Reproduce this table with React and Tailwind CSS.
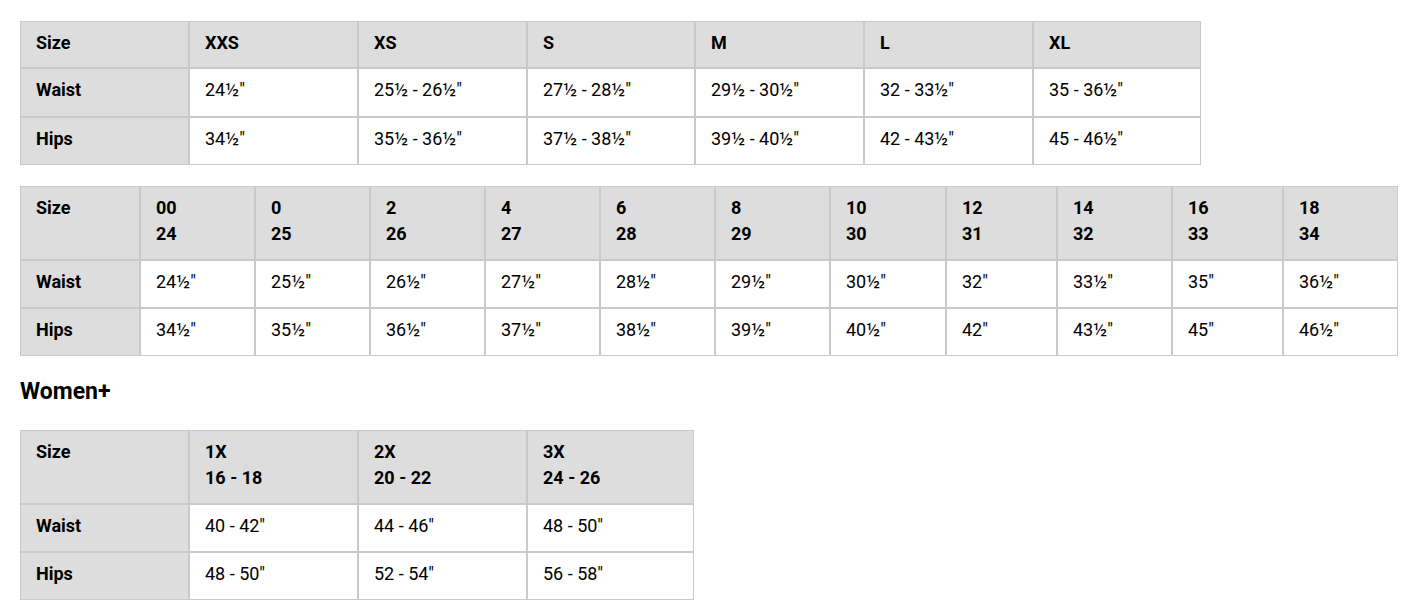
const t1 = {
  widths: [169, 169, 169, 168, 169, 169, 168],
  headPad: "pb-[11px]",
  waistPad: "pb-[13px]",
  head: ["XXS", "XS", "S", "M", "L", "XL"],
  waist: ["24½\"", "25½ - 26½\"", "27½ - 28½\"", "29½ - 30½\"", "32 - 33½\"", "35 - 36½\""],
  hips: ["34½\"", "35½ - 36½\"", "37½ - 38½\"", "39½ - 40½\"", "42 - 43½\"", "45 - 46½\""],
};

const t2 = {
  widths: [120, 115, 115, 115, 115, 115, 115, 116, 111, 115, 111, 115],
  headPad: "pb-[12px]",
  waistPad: "pb-[12px]",
  head: [["00", "24"], ["0", "25"], ["2", "26"], ["4", "27"], ["6", "28"], ["8", "29"], ["10", "30"], ["12", "31"], ["14", "32"], ["16", "33"], ["18", "34"]],
  waist: ["24½\"", "25½\"", "26½\"", "27½\"", "28½\"", "29½\"", "30½\"", "32\"", "33½\"", "35\"", "36½\""],
  hips: ["34½\"", "35½\"", "36½\"", "37½\"", "38½\"", "39½\"", "40½\"", "42\"", "43½\"", "45\"", "46½\""],
};

const t3 = {
  widths: [169, 169, 169, 167],
  headPad: "pb-[12px]",
  waistPad: "pb-[12px]",
  head: [["1X", "16 - 18"], ["2X", "20 - 22"], ["3X", "24 - 26"]],
  waist: ["40 - 42\"", "44 - 46\"", "48 - 50\""],
  hips: ["48 - 50\"", "52 - 54\"", "56 - 58\""],
};

const cell = "border border-[#c9c9c9] pl-[15px] pr-2 pt-[8px] text-left align-top";

function SizeTable({ data }) {
  const total = data.widths.reduce((a, b) => a + b, 0);
  return (
    <table className="table-fixed border-separate border-spacing-0" style={{ width: total }}>
      <colgroup>
        {data.widths.map((w, i) => (
          <col key={i} style={{ width: w }} />
        ))}
      </colgroup>
      <thead>
        <tr className="bg-[#dddddd]">
          <th className={`${cell} ${data.headPad} font-bold`}>Size</th>
          {data.head.map((h, i) => (
            <th key={i} className={`${cell} ${data.headPad} font-bold`}>
              {Array.isArray(h) ? h.map((l, j) => <div key={j}>{l}</div>) : h}
            </th>
          ))}
        </tr>
      </thead>
      <tbody>
        <tr>
          <th className={`${cell} ${data.waistPad} bg-[#dddddd] font-bold`}>Waist</th>
          {data.waist.map((v, i) => (
            <td key={i} className={`${cell} ${data.waistPad} bg-white font-normal`}>{v}</td>
          ))}
        </tr>
        <tr>
          <th className={`${cell} pb-[12px] bg-[#dddddd] font-bold`}>Hips</th>
          {data.hips.map((v, i) => (
            <td key={i} className={`${cell} pb-[12px] bg-white font-normal`}>{v}</td>
          ))}
        </tr>
      </tbody>
    </table>
  );
}

export default function App() {
  return (
    <div className="bg-white min-h-screen pt-[21px] pl-[20px] text-black text-[18px] leading-[26px] font-['Roboto',sans-serif]">
      <SizeTable data={t1} />
      <div className="mt-[21px]">
        <SizeTable data={t2} />
      </div>
      <h2 className="mt-[22px] text-[23px] leading-[28px] font-bold">Women+</h2>
      <div className="mt-[24px]">
        <SizeTable data={t3} />
      </div>
    </div>
  );
}
